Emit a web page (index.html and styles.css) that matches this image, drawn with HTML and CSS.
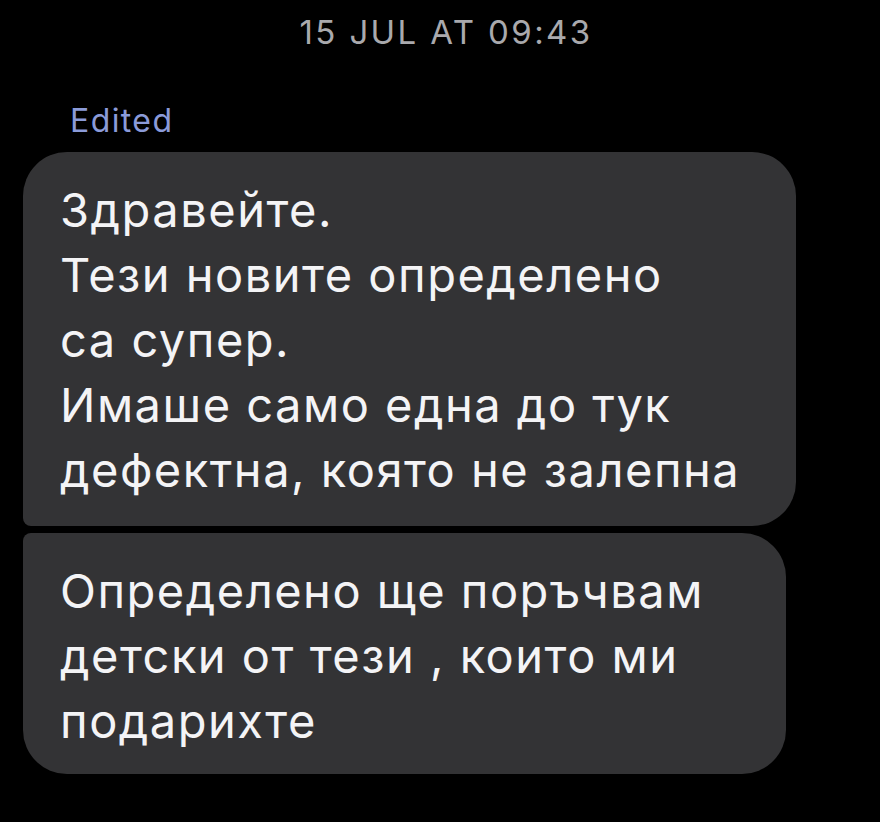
FILE: index.html
```html
<!DOCTYPE html>
<html lang="bg">
<head>
<meta charset="utf-8">
<title>Messages</title>
<link rel="stylesheet" href="styles.css">
</head>
<body>
<main class="thread">
  <div class="timestamp">15 JUL AT 09:43</div>
  <div class="edited">Edited</div>
  <div class="bubbles">
    <div class="bubble first">Здравейте.<br>Тези новите определено<br>са супер.<br>Имаше само една до тук<br>дефектна, която не залепна</div>
    <div class="bubble second">Определено ще поръчвам<br>детски от тези , които ми<br>подарихте</div>
  </div>
</main>
</body>
</html>
```
FILE: styles.css
```css
html, body {
  margin: 0;
  background: #000;
}
body {
  font-family: "Inter", "Noto Sans", sans-serif;
  color: #f4f4f6;
}
.thread {
  display: flex;
  flex-direction: column;
}
.timestamp {
  align-self: center;
  margin-top: 12px;
  padding-left: 12px;
  font-size: 33px;
  line-height: 40px;
  color: #a9a9ad;
  letter-spacing: 2.4px;
}
.edited {
  margin: 51px 0 0 70px;
  font-size: 32px;
  line-height: 36px;
  color: #8b9bd9;
  letter-spacing: 1.4px;
}
.bubbles {
  display: flex;
  flex-direction: column;
  gap: 7px;
  margin: 13px 0 0 23px;
}
.bubble {
  box-sizing: border-box;
  background: #333335;
  font-size: 47px;
  line-height: 65px;
  letter-spacing: 1.5px;
  white-space: nowrap;
  padding-left: 37px;
}
.first {
  width: 773px;
  padding-top: 25px;
  padding-bottom: 24px;
  border-radius: 44px 44px 44px 8px;
}
.second {
  width: 763px;
  padding-top: 25px;
  padding-bottom: 21px;
  border-radius: 8px 44px 44px 44px;
}
```
